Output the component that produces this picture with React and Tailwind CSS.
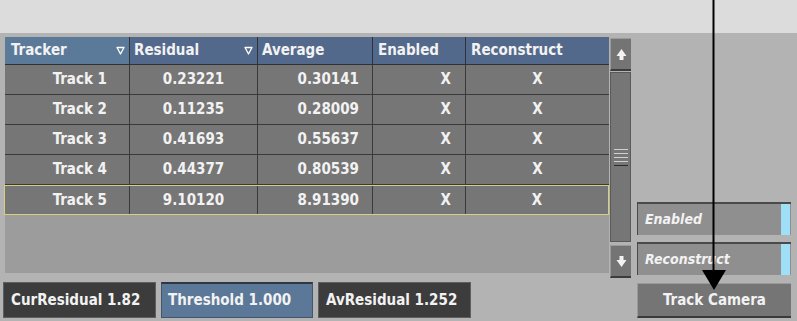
const rows = [
  { name: "Track 1", res: "0.23221", avg: "0.30141" },
  { name: "Track 2", res: "0.11235", avg: "0.28009" },
  { name: "Track 3", res: "0.41693", avg: "0.55637" },
  { name: "Track 4", res: "0.44377", avg: "0.80539" },
  { name: "Track 5", res: "9.10120", avg: "8.91390", active: true },
];

const font = { fontFamily: '"DejaVu Sans Condensed", "DejaVu Sans", sans-serif' };

function SortMark() {
  return (
    <svg width="9" height="9" viewBox="0 0 9 9" className="shrink-0">
      <path d="M1 1.5 H8 L4.5 8 Z" fill="none" stroke="#fff" strokeWidth="1.3" strokeLinejoin="round" />
    </svg>
  );
}

function Arrow({ up }) {
  return (
    <svg width="11" height="13" viewBox="0 0 11 13">
      {up ? (
        <path d="M5.5 1 L10.5 8 H7.5 V12 H3.5 V8 H0.5 Z" fill="#f2f2f2" />
      ) : (
        <path d="M5.5 12 L10.5 5 H7.5 V1 H3.5 V5 H0.5 Z" fill="#f2f2f2" />
      )}
    </svg>
  );
}

export default function App() {
  return (
    <div className="relative w-[797px] h-[321px] overflow-hidden bg-[#b3b3b3] text-[#f2f2f2] font-bold text-[15px]" style={font}>
      {/* top strip */}
      <div className="h-[33px] bg-[#dcdcdc]" />

      <div className="flex">
        {/* left: table + fields */}
        <div className="w-[631px] pl-[3px]">
          <div className="flex pt-[4px] pl-[2px]">
            {/* table */}
            <div className="w-[604px] h-[236px] bg-[#9c9c9c] flex flex-col">
              <div className="flex h-[28px] bg-[#52698b] border-b border-[#2f3338]">
                <div className="w-[125px] flex items-center justify-between pl-[6px] pr-[4px] bg-[#5b7999] border-r border-[#2f3338]">
                  Tracker <SortMark />
                </div>
                <div className="w-[128px] flex items-center justify-between pl-[4px] pr-[4px] border-r border-[#2f3338]">
                  Residual <SortMark />
                </div>
                <div className="w-[115px] flex items-center pl-[4px] border-r border-[#2f3338]">Average</div>
                <div className="w-[93px] flex items-center pl-[5px] border-r border-[#2f3338]">Enabled</div>
                <div className="flex-1 flex items-center pl-[5px] rounded-tr-[3px]">Reconstruct</div>
              </div>
              {rows.map((r) => (
                <div
                  key={r.name}
                  className={`flex h-[30px] bg-[#767676] ${
                    r.active ? "border border-[#d6d07a] -ml-[1px]" : "border-b border-[#3a3a3a]"
                  }`}
                >
                  <div className="w-[125px] flex items-center justify-end pr-[22px] border-r border-[#3a3a3a]">{r.name}</div>
                  <div className="w-[128px] flex items-center justify-center border-r border-[#3a3a3a]">{r.res}</div>
                  <div className="w-[115px] flex items-center justify-end pr-[13px] border-r border-[#3a3a3a]">{r.avg}</div>
                  <div className="w-[93px] flex items-center justify-end pr-[14px] border-r border-[#3a3a3a]">X</div>
                  <div className="flex-1 flex items-center justify-center">X</div>
                </div>
              ))}
            </div>

            {/* scrollbar */}
            <div className="w-[22px] flex flex-col pl-[1px]">
              <div className="h-[33px] mt-[1px] bg-[#747474] border-t border-l border-[#9a9a9a] border-b-2 border-b-[#3c3c3c] flex items-center justify-center">
                <Arrow up />
              </div>
              <div className="h-[170px] mt-[1px] bg-[#767676] border border-[#5a5a5a] flex items-center justify-center">
                <div className="flex flex-col gap-[3px] w-[14px]">
                  <div className="h-[1px] bg-[#d0d0d0]" />
                  <div className="h-[1px] bg-[#d0d0d0]" />
                  <div className="h-[1px] bg-[#d0d0d0]" />
                  <div className="h-[1px] bg-[#d0d0d0]" />
                  <div className="h-[1px] bg-[#2a2a2a]" />
                </div>
              </div>
              <div className="h-[33px] mt-[3px] bg-[#747474] border-t border-l border-[#9a9a9a] border-b-2 border-b-[#3c3c3c] flex items-center justify-center">
                <Arrow />
              </div>
            </div>
          </div>

          {/* value fields */}
          <div className="flex gap-[5px] mt-[4px]">
            <div className="w-[153px] h-[36px] bg-[#3c3c3c] border border-[#5e5e5e] flex items-center pl-[7px]">
              CurResidual 1.82
            </div>
            <div className="w-[152px] h-[36px] bg-[#5b7898] border border-[#45556a] border-t-2 border-t-[#2e3644] flex items-center pl-[6px]">
              Threshold 1.000
            </div>
            <div className="w-[153px] h-[36px] bg-[#3c3c3c] border border-[#5e5e5e] flex items-center pl-[7px]">
              AvResidual 1.252
            </div>
          </div>
        </div>

        {/* right column */}
        <div className="ml-[6px] w-[154px] flex flex-col pt-[169px]">
          <div className="h-[33px] bg-[#8f8f8f] border-t-2 border-l border-[#4a4a4a] flex items-center pl-[7px] italic text-[14px] relative">
            Enabled
            <div className="absolute right-[1px] top-0 bottom-0 w-[9px] bg-[#9fe0f8]" />
          </div>
          <div className="h-[33px] mt-[7px] bg-[#8f8f8f] border-t-2 border-l border-[#4a4a4a] flex items-center pl-[7px] italic text-[14px] relative">
            Reconstruct
            <div className="absolute right-[1px] top-0 bottom-0 w-[9px] bg-[#9fe0f8]" />
          </div>
          <div className="h-[35px] mt-[8px] bg-[#757575] border-t border-l border-[#9a9a9a] border-b-2 border-b-[#3a3a3a] flex items-center justify-center">
            Track Camera
          </div>
        </div>
      </div>

      {/* callout arrow */}
      <svg className="absolute left-0 top-0 pointer-events-none" width="797" height="321">
        <line x1="713.5" y1="0" x2="713.5" y2="272" stroke="#000" strokeWidth="2" />
        <path d="M702 270 H726 L714 290 Z" fill="#000" />
      </svg>
    </div>
  );
}
